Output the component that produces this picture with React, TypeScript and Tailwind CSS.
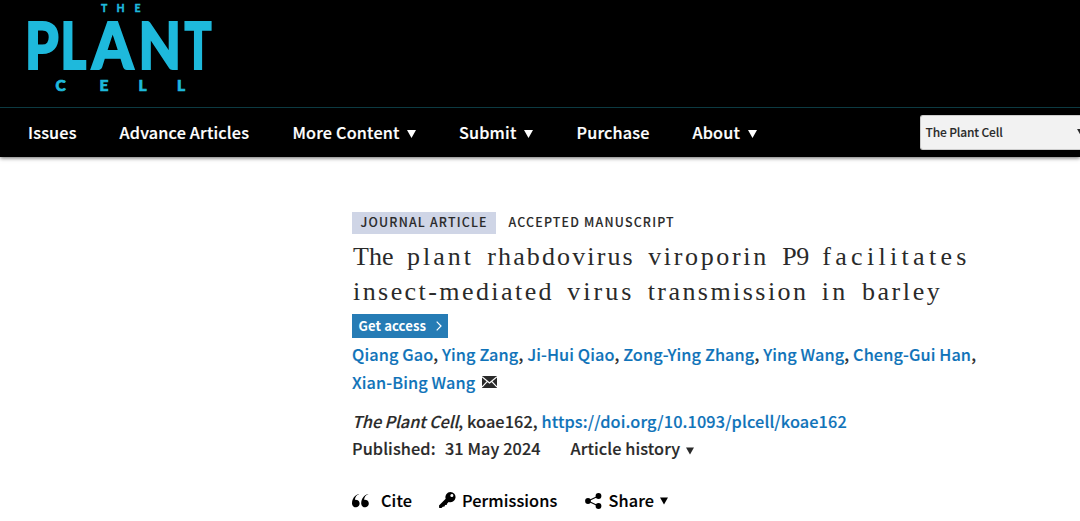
const navItems = [
  { label: 'Issues', width: 'w-[91.5px]', menu: false },
  { label: 'Advance Articles', width: 'w-[173px]', menu: false },
  { label: 'More Content', width: 'w-[166.5px]', menu: true },
  { label: 'Submit', width: 'w-[117.5px]', menu: true },
  { label: 'Purchase', width: 'w-[116px]', menu: false },
  { label: 'About', width: 'w-[80px]', menu: true },
];

const authors = ['Qiang Gao', 'Ying Zang', 'Ji-Hui Qiao', 'Zong-Ying Zhang', 'Ying Wang', 'Cheng-Gui Han'];

// The wordmark's letters have their own proportions
const logoLetters = [
  { letter: 'P', x: -3, scale: 0.84 },
  { letter: 'L', x: 32.5, scale: 0.77 },
  { letter: 'A', x: 64, scale: 0.92 },
  { letter: 'N', x: 110.5, scale: 0.86 },
  { letter: 'T', x: 156.5, scale: 0.7 },
];

const Caret = ({ className }: { className: string }) => (
  <svg viewBox="0 0 9 8" className={`shrink-0 fill-current ${className}`}>
    <path d="M0 0h9L4.5 8z" />
  </svg>
);

const Logo = () => (
  <svg width="192" height="94" viewBox="0 0 192 94" className="block overflow-visible fill-[#1eb9dc] stroke-[#1eb9dc]">
    <g fontFamily="Lato, sans-serif" fontWeight="900">
      <text x="73 88.500 106.500" y="11.500" fontSize="10.500" strokeWidth=".3">THE</text>
      {logoLetters.map(({ letter, x, scale }) => (
        <text key={letter} transform={`translate(${x} 69) scale(${scale} 1)`} fontSize="64" strokeWidth="2">
          {letter}
        </text>
      ))}
      <text x="27.500 71.500 110.500 149" y="90.500" fontSize="15.500" strokeWidth=".7">CELL</text>
    </g>
  </svg>
);

const Envelope = () => (
  <svg width="15" height="12" viewBox="0 0 15 12" className="shrink-0">
    <rect width="15" height="12" fill="#2a2a2a" />
    <path d="M0 .8 7.500 7 15 .8M0 11 5.300 5.400M15 11 9.700 5.400" fill="none" stroke="#fff" strokeWidth="1.200" />
  </svg>
);

const QuoteIcon = () => (
  <svg width="17" height="14" viewBox="0 0 17 14" className="mt-[1px] mr-[12px] shrink-0">
    <path d="M7 .3C4.600 1.200 3 3.200 2.900 5.800a3.800 3.800 0 1 1-2.900 4C-.1 5 2.500 1.200 7 0z" />
    <path d="M16.200.300c-2.400.900-4 2.900-4.100 5.500a3.800 3.800 0 1 1-2.900 4C9.100 5 11.700 1.200 16.200 0z" />
  </svg>
);

const KeyIcon = () => (
  <svg width="17" height="16" viewBox="0 0 17 16" className="mr-[6px] shrink-0">
    <path
      fillRule="evenodd"
      d="M11.400 0a5.100 5.100 0 1 1-1.700 9.900L8.300 11.200l-.4 1.500-1.800.2-.6 1.600-1.700.2L2.500 16H.2L0 13.500l6.700-6.700A5.100 5.100 0 0 1 11.400 0zm1.400 2.100a1.500 1.500 0 1 0 .1 3 1.500 1.500 0 0 0-.1-3z"
    />
  </svg>
);

const ShareIcon = () => (
  <svg width="17" height="16" viewBox="0 0 17 16" className="mt-[2px] mr-[6.5px] shrink-0">
    <path d="M13.500 3 3 8l10.500 5" fill="none" stroke="#000" strokeWidth="1.100" />
    <circle cx="13.500" cy="3" r="2.900" />
    <circle cx="3" cy="8" r="2.900" />
    <circle cx="13.500" cy="13" r="2.900" />
  </svg>
);

const Header = () => (
  <header className="h-[157px] bg-black shadow-[0_1px_4px_rgba(0,0,0,0.6)]">
    <div className="h-[107px] pl-[28px]">
      <Logo />
    </div>
    <div className="flex h-[50px] items-center border-t border-[#0c3a42] pl-[28px]">
      <nav className="flex shrink-0 text-[16.2px] font-medium tracking-[0.18px] text-white [-webkit-text-stroke:0.2px]">
        {navItems.map((item) => (
          <a key={item.label} className={`flex shrink-0 items-center whitespace-nowrap ${item.width}`}>
            {item.label}
            {item.menu && <Caret className="mt-[4px] ml-[7.5px] h-[8px] w-[9px]" />}
          </a>
        ))}
      </nav>
      <div className="ml-auto flex h-[35px] w-[160px] shrink-0 items-center overflow-hidden rounded-l-[3px] border border-r-0 border-[#ccc] bg-[#f2f2f2] pb-[1px] pl-[4.5px] text-[12px] font-medium text-[#2a2a2a] [-webkit-text-stroke:0.1px]">
        <span className="w-[151px] shrink-0 tracking-[-0.15px]">The Plant Cell</span>
        <Caret className="h-[7px] w-[8px]" />
      </div>
    </div>
  </header>
);

const Title = () => (
  <h1 className="mt-[5px] pl-[1px] font-['Liberation_Serif',serif] text-[26px] leading-[35px] whitespace-nowrap text-[#2a2a2a] [word-spacing:6.7px]">
    <span>The</span> <span className="tracking-[3px]">plant</span>{' '}
    <span className="tracking-[2.12px]">rhabdovirus</span>{' '}
    <span className="tracking-[2.66px]">viroporin</span>{' '}
    <span className="tracking-[-0.3px]">P9</span>{' '}
    <span className="tracking-[4.3px]">facilitates</span>
    <br />
    <span className="tracking-[2.43px]">insect-mediated</span>{' '}
    <span className="tracking-[3px]">virus</span>{' '}
    <span className="tracking-[2.45px]">transmission</span>{' '}
    <span className="tracking-[3.3px]">in</span>{' '}
    <span className="tracking-[2.58px]">barley</span>
  </h1>
);

const App = () => {
  return (
    <div className="h-[521px] w-[1080px] overflow-hidden bg-white font-['Noto_Sans_CJK_SC',sans-serif] text-[#2a2a2a]">
      <Header />
      <main className="ml-[352px] pt-[55px] text-[16.3px] font-medium tracking-[0.09px] whitespace-nowrap [-webkit-text-stroke:0.15px]">
        <div className="flex h-[22px] items-center text-[12.4px] leading-[20px] tracking-[1.2px] [-webkit-text-stroke:0.1px]">
          <span className="h-[22px] w-[144px] bg-[#cfd5e6] pl-[8.5px]">JOURNAL ARTICLE</span>
          <span className="ml-[12.5px] h-[22px]">ACCEPTED MANUSCRIPT</span>
        </div>

        <div className="[-webkit-text-stroke:0]">
          <Title />
        </div>

        <button className="mt-[5px] flex h-[24px] w-[96px] items-center bg-[#267cb5] pb-[1px] pl-[6.5px] text-[13.1px] font-bold text-white [-webkit-text-stroke:0]">
          Get access
          <svg width="6" height="10" viewBox="0 0 6 10" className="ml-[10px]">
            <path d="M.7.700 5 5 .7 9.300" fill="none" stroke="currentColor" strokeWidth="1.200" />
          </svg>
        </button>

        <div className="mt-[2px] leading-[28px] tracking-[0.11px]">
          {authors.map((author) => (
            <span key={author}>
              <a className="text-[#0f73b9]">{author}</a>,{' '}
            </span>
          ))}
          <div className="flex items-center gap-[6.5px]">
            <a className="text-[#0f73b9]">Xian-Bing Wang</a>
            <Envelope />
          </div>
        </div>

        <div className="mt-[12px] leading-[27px]">
          <div>
            <em className="tracking-[-0.08px]">The Plant Cell</em>, koae162,{' '}
            <a className="tracking-[0.12px] text-[#0f73b9]">https://doi.org/10.1093/plcell/koae162</a>
          </div>
          <div className="flex items-center">
            <span className="w-[93px]">Published:</span>
            <span className="w-[125.5px]">31 May 2024</span>
            <span>Article history</span>
            <Caret className="mt-[4px] ml-[5.5px] h-[8px] w-[8px]" />
          </div>
        </div>

        {/* Toolbar */}
        <div className="mt-[25px] flex h-[26px] items-center text-black">
          <a className="flex w-[87px] items-center">
            <QuoteIcon />
            Cite
          </a>
          <a className="flex w-[146px] items-center">
            <KeyIcon />
            Permissions
          </a>
          <a className="flex items-center">
            <ShareIcon />
            Share
            <Caret className="mt-[2px] ml-[6px] h-[8px] w-[8px]" />
          </a>
        </div>
      </main>
    </div>
  );
};

export default App;
